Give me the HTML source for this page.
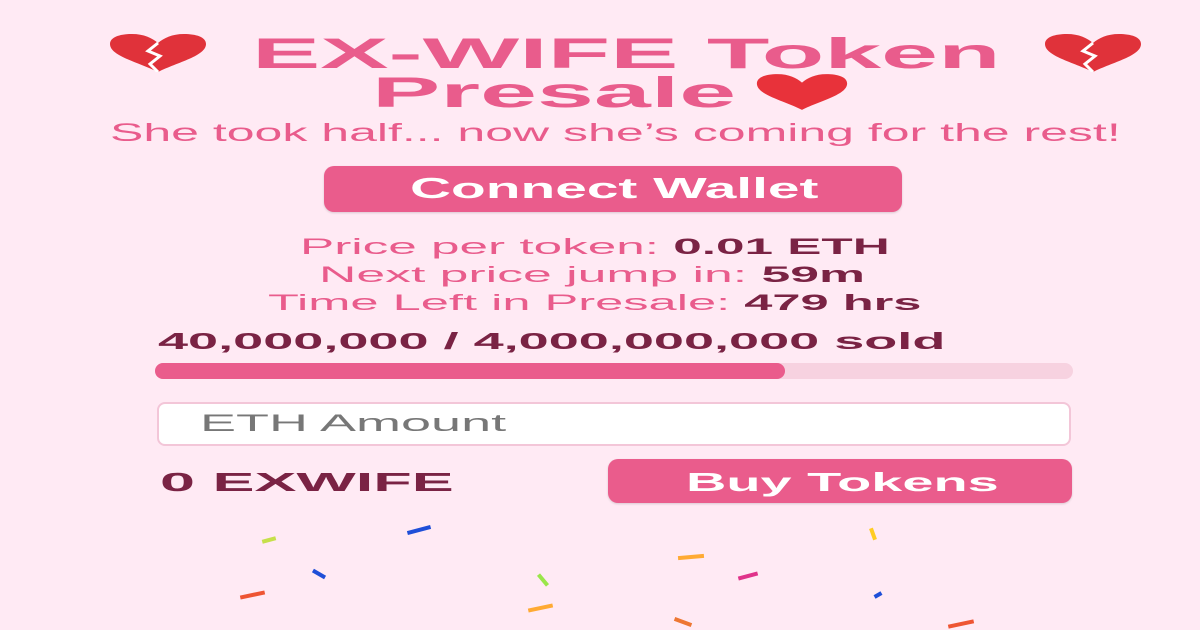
<!DOCTYPE html>
<html><head><meta charset="utf-8"><style>
body{margin:0;width:1200px;height:630px;background:#ffeaf4;overflow:hidden;position:relative;font-family:"Liberation Sans",sans-serif}
.l{position:absolute;white-space:nowrap;transform-origin:left center}
.pk{color:#e95c8c}
.dk{color:#7a2344;font-weight:bold}
.btn{position:absolute;background:#ea5c8c;border-radius:10px;box-shadow:0 1px 2px rgba(0,0,0,.15)}
.cf{position:absolute;height:4px;width:16px}
</style></head><body>
<svg style="position:absolute;left:108px;top:34px" width="100" height="38" viewBox="0 0 100 38"><path d="M50 38 C30 28 2 22 2 10 C2 3 12 0 24 0 C36 0 44 4 50 9 C56 4 64 0 76 0 C88 0 98 3 98 10 C98 22 70 28 50 38Z" fill="#e0323a"/><path d="M50 9 L40 17 L52 22 L42 30 L50 38" stroke="#fff" stroke-width="3" fill="none"/></svg>
<svg style="position:absolute;left:1043px;top:34px" width="100" height="38" viewBox="0 0 100 38"><path d="M50 38 C30 28 2 22 2 10 C2 3 12 0 24 0 C36 0 44 4 50 9 C56 4 64 0 76 0 C88 0 98 3 98 10 C98 22 70 28 50 38Z" fill="#e0323a"/><path d="M50 9 L40 17 L52 22 L42 30 L50 38" stroke="#fff" stroke-width="3" fill="none"/></svg>
<svg style="position:absolute;left:755px;top:74px" width="94" height="36" viewBox="0 0 100 38"><path d="M50 38 C30 28 2 22 2 10 C2 3 12 0 24 0 C36 0 44 4 50 9 C56 4 64 0 76 0 C88 0 98 3 98 10 C98 22 70 28 50 38Z" fill="#e8323a"/></svg>
<div class="l pk" style="left:252px;top:30px;font-size:43px;font-weight:bold;transform:scaleX(2.38)">EX-WIFE Token</div>
<div class="l pk" style="left:372px;top:69px;font-size:43px;font-weight:bold;transform:scaleX(2.38)">Presale</div>
<div class="l pk" style="left:110px;top:119px;font-size:25px;transform:scaleX(2.0)">She took half... now she’s coming for the rest!</div>
<div class="btn" style="left:324px;top:166px;width:578px;height:46px"></div>
<div class="l" style="left:410px;top:173px;font-size:29px;font-weight:bold;color:#fff;transform:scaleX(1.96)">Connect Wallet</div>
<div class="l" style="left:300px;top:234px;font-size:22px;transform:scaleX(2.33)"><span class="pk">Price per token: </span><b class="dk">0.01 ETH</b></div>
<div class="l" style="left:319px;top:262px;font-size:22px;transform:scaleX(2.35)"><span class="pk">Next price jump in: </span><b class="dk">59m</b></div>
<div class="l" style="left:268px;top:290px;font-size:22px;transform:scaleX(2.3)"><span class="pk">Time Left in Presale: </span><b class="dk">479 hrs</b></div>
<div class="l dk" style="left:158px;top:328px;font-size:23px;transform:scaleX(2.35)">40,000,000 / 4,000,000,000 sold</div>
<div style="position:absolute;left:155px;top:363px;width:918px;height:16px;border-radius:8px;background:#f7d2e0"></div>
<div style="position:absolute;left:155px;top:363px;width:630px;height:16px;border-radius:8px;background:#ea5c8c"></div>
<div style="position:absolute;left:157px;top:402px;width:910px;height:40px;background:#fff;border:2px solid #f3c6d8;border-radius:8px"></div>
<div class="l" style="left:200px;top:410px;font-size:24px;color:#777;transform:scaleX(2.25)">ETH Amount</div>
<div class="l dk" style="left:160px;top:467px;font-size:26px;transform:scaleX(2.42)">0 EXWIFE</div>
<div class="btn" style="left:608px;top:459px;width:464px;height:44px"></div>
<div class="l" style="left:686px;top:467px;font-size:26px;font-weight:bold;color:#fff;transform:scaleX(2.15)">Buy Tokens</div>
<div class="cf" style="left:262px;top:538px;background:#c6e04a;width:14px;transform:rotate(-15deg)"></div>
<div class="cf" style="left:407px;top:528px;background:#1f4fd8;width:24px;transform:rotate(-15deg)"></div>
<div class="cf" style="left:312px;top:572px;background:#1f4fd8;width:14px;transform:rotate(30deg)"></div>
<div class="cf" style="left:240px;top:593px;background:#ee5533;width:25px;transform:rotate(-12deg)"></div>
<div class="cf" style="left:536px;top:578px;background:#9ae64a;width:14px;transform:rotate(50deg)"></div>
<div class="cf" style="left:528px;top:606px;background:#ffaa33;width:25px;transform:rotate(-12deg)"></div>
<div class="cf" style="left:678px;top:555px;background:#ffaa33;width:26px;transform:rotate(-5deg)"></div>
<div class="cf" style="left:738px;top:574px;background:#e0338a;width:20px;transform:rotate(-15deg)"></div>
<div class="cf" style="left:867px;top:532px;background:#ffcc22;width:12px;transform:rotate(70deg)"></div>
<div class="cf" style="left:874px;top:593px;background:#1f4fd8;width:8px;transform:rotate(-30deg)"></div>
<div class="cf" style="left:674px;top:620px;background:#ee7733;width:18px;transform:rotate(20deg)"></div>
<div class="cf" style="left:948px;top:622px;background:#ee5533;width:26px;transform:rotate(-12deg)"></div>
</body></html>
